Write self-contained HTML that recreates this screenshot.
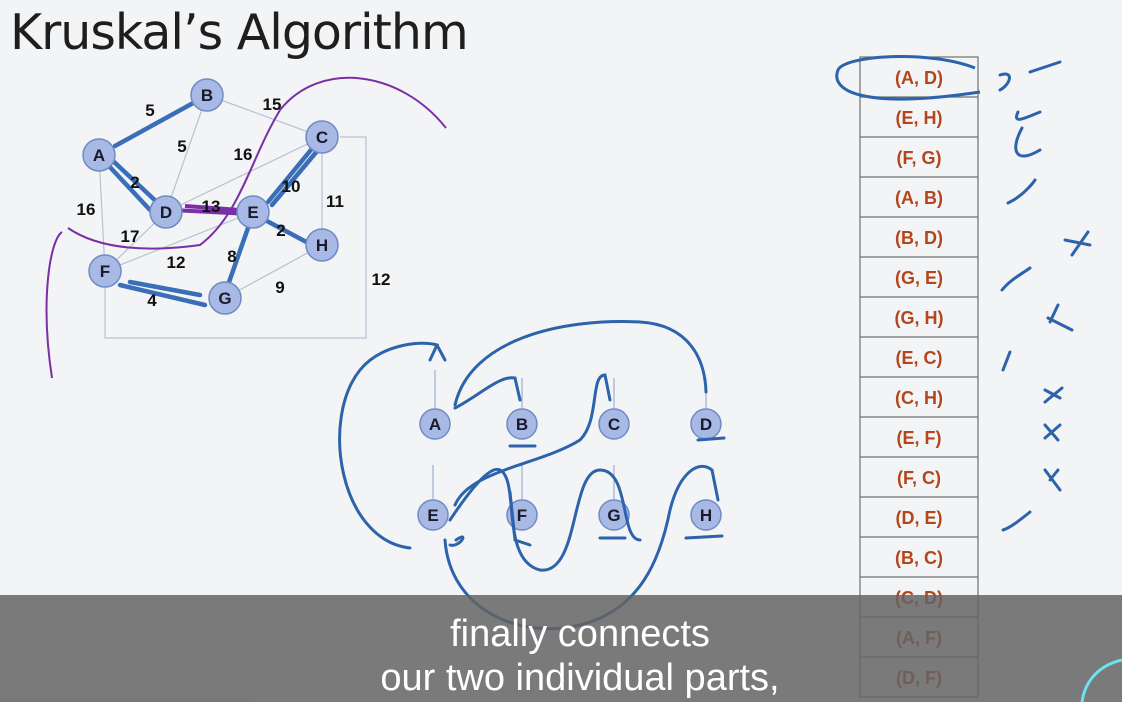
<!DOCTYPE html>
<html><head><meta charset="utf-8"><style>
body{margin:0;width:1122px;height:702px;overflow:hidden;background:#f3f4f6;font-family:"Liberation Sans",sans-serif;position:relative}
.t{position:absolute;left:10px;top:4px;font-size:49px;color:#1e1e1e;font-family:"DejaVu Sans","Liberation Sans",sans-serif;letter-spacing:-1px}
.cap{position:absolute;left:0;top:595px;width:1122px;height:107px;background:rgba(100,100,100,0.85)}
.ct{position:absolute;left:0;width:1160px;text-align:center;color:#fff;font-size:38px;line-height:44px}
</style></head><body>
<div class="t">Kruskal’s Algorithm</div>
<svg width="1122" height="702" style="position:absolute;left:0;top:0" font-family="Liberation Sans" font-weight="bold">
<g stroke="#b8c0d4" stroke-width="1.2" fill="none">
<line x1="99" y1="155" x2="207" y2="95"/><line x1="207" y1="95" x2="322" y2="137"/><line x1="207" y1="95" x2="166" y2="212"/>
<line x1="166" y1="212" x2="322" y2="137"/><line x1="99" y1="155" x2="105" y2="271"/><line x1="166" y1="212" x2="105" y2="271"/>
<line x1="105" y1="271" x2="253" y2="212"/><line x1="225" y1="298" x2="322" y2="245"/><line x1="322" y1="137" x2="322" y2="245"/>
<polyline points="340,137 366,137 366,338 105,338 105,271"/>
</g>
<g stroke="#3a6fb8" stroke-width="4.5" fill="none" stroke-linecap="round">
<path d="M115,146 L195,102"/><path d="M108,165 L150,210 M112,160 L160,205"/><path d="M268,202 L315,145 M272,205 L318,150"/>
<path d="M265,220 L312,245"/><path d="M248,228 L228,285"/><path d="M120,285 L205,305 M130,282 L200,295"/>
</g>
<path d="M172,210 L250,214 M185,206 L240,210" stroke="#7a2fa6" stroke-width="4" fill="none"/>
<path d="M52,378 C40,300 50,240 62,232 M68,228 C100,250 150,252 200,245 C240,215 250,160 280,110 C320,60 400,70 446,128" stroke="#7a2fa6" stroke-width="2" fill="none"/>
<g fill="#111" font-size="17" text-anchor="middle">
<text x="150" y="116">5</text><text x="182" y="152">5</text><text x="272" y="110">15</text><text x="243" y="160">16</text>
<text x="135" y="188">2</text><text x="86" y="215">16</text><text x="130" y="242">17</text><text x="211" y="212">13</text>
<text x="291" y="192">10</text><text x="335" y="207">11</text><text x="281" y="236">2</text><text x="232" y="262">8</text>
<text x="176" y="268">12</text><text x="280" y="293">9</text><text x="152" y="306">4</text><text x="381" y="285">12</text>
</g>
<g fill="#a7b9e4" stroke="#6f8bc4" stroke-width="1.5">
<circle cx="99" cy="155" r="16"/><circle cx="207" cy="95" r="16"/><circle cx="322" cy="137" r="16"/><circle cx="166" cy="212" r="16"/>
<circle cx="253" cy="212" r="16"/><circle cx="105" cy="271" r="16"/><circle cx="225" cy="298" r="16"/><circle cx="322" cy="245" r="16"/>
<circle cx="435" cy="424" r="15"/><circle cx="522" cy="424" r="15"/><circle cx="614" cy="424" r="15"/><circle cx="706" cy="424" r="15"/>
<circle cx="433" cy="515" r="15"/><circle cx="522" cy="515" r="15"/><circle cx="614" cy="515" r="15"/><circle cx="706" cy="515" r="15"/>
</g>
<g fill="#1a1a2a" font-size="17" text-anchor="middle">
<text x="99" y="161">A</text><text x="207" y="101">B</text><text x="322" y="143">C</text><text x="166" y="218">D</text>
<text x="253" y="218">E</text><text x="105" y="277">F</text><text x="225" y="304">G</text><text x="322" y="251">H</text>
<text x="435" y="430">A</text><text x="522" y="430">B</text><text x="614" y="430">C</text><text x="706" y="430">D</text>
<text x="433" y="521">E</text><text x="522" y="521">F</text><text x="614" y="521">G</text><text x="706" y="521">H</text>
</g>
<g stroke="#8aa0cc" stroke-width="1"><line x1="435" y1="408" x2="435" y2="370"/><line x1="522" y1="408" x2="522" y2="378"/><line x1="614" y1="408" x2="614" y2="378"/><line x1="706" y1="408" x2="706" y2="378"/><line x1="433" y1="499" x2="433" y2="465"/><line x1="522" y1="499" x2="522" y2="465"/><line x1="614" y1="499" x2="614" y2="465"/></g>
<g stroke="#2c63aa" stroke-width="3" fill="none" stroke-linecap="round">
<path d="M410,548 C340,540 320,420 360,370 C380,345 420,340 437,345 L430,360 M437,345 L445,360"/>
<path d="M455,405 C470,340 560,318 640,322 C690,325 705,360 706,392"/>
<path d="M455,408 C480,395 500,375 515,378 L520,400"/>
<path d="M455,505 C470,470 540,465 580,440 C600,420 590,375 605,375 L610,400"/>
<path d="M450,520 C470,490 490,465 500,470 C520,480 500,560 540,570 C580,575 570,470 600,470 C630,470 620,540 640,540"/>
<path d="M445,540 C450,610 520,640 580,625 C640,610 660,560 670,510 C680,470 700,460 712,470 L718,500"/>
<path d="M510,492 L515,540 L530,545 M456,540 C470,530 460,548 450,545"/>
<path d="M510,446 L535,446 M698,440 L724,438 M600,538 L625,538 M686,538 L722,536 M884,408 L970,406"/>
<path d="M1000,75 C1015,70 1010,85 1000,90 M1030,72 L1060,62 M1018,112 C1012,125 1025,118 1040,112 M1022,128 C1010,150 1015,165 1040,150 M1008,203 C1025,195 1035,180 1035,180 M1072,255 L1088,232 M1065,240 L1090,245 M1002,290 C1010,280 1020,275 1030,268 M1050,322 L1058,305 M1048,318 L1072,330 M1003,370 L1010,352 M1045,390 L1060,398 M1045,402 L1062,388 M1045,438 L1060,425 M1045,425 L1058,440 M1050,480 L1058,470 M1045,470 L1060,490 M1003,530 C1010,528 1020,520 1030,512"/>
</g>
<g stroke="#6f6f6f" stroke-width="1.2" fill="#f3f4f6"><rect x="860" y="57" width="118" height="640"/></g>
<g stroke="#6f6f6f" stroke-width="1.2">
<line x1="860" y1="97" x2="978" y2="97"/><line x1="860" y1="137" x2="978" y2="137"/><line x1="860" y1="177" x2="978" y2="177"/><line x1="860" y1="217" x2="978" y2="217"/><line x1="860" y1="257" x2="978" y2="257"/><line x1="860" y1="297" x2="978" y2="297"/><line x1="860" y1="337" x2="978" y2="337"/><line x1="860" y1="377" x2="978" y2="377"/><line x1="860" y1="417" x2="978" y2="417"/><line x1="860" y1="457" x2="978" y2="457"/><line x1="860" y1="497" x2="978" y2="497"/><line x1="860" y1="537" x2="978" y2="537"/><line x1="860" y1="577" x2="978" y2="577"/><line x1="860" y1="617" x2="978" y2="617"/><line x1="860" y1="657" x2="978" y2="657"/>
</g>
<g fill="#b4461c" font-size="18" text-anchor="middle">
<text x="919" y="84">(A, D)</text><text x="919" y="124">(E, H)</text><text x="919" y="164">(F, G)</text><text x="919" y="204">(A, B)</text><text x="919" y="244">(B, D)</text><text x="919" y="284">(G, E)</text><text x="919" y="324">(G, H)</text><text x="919" y="364">(E, C)</text><text x="919" y="404">(C, H)</text><text x="919" y="444">(E, F)</text><text x="919" y="484">(F, C)</text><text x="919" y="524">(D, E)</text><text x="919" y="564">(B, C)</text><text x="919" y="604">(C, D)</text><text x="919" y="644">(A, F)</text><text x="919" y="684">(D, F)</text>
</g>
<path d="M980,92 C860,110 830,90 838,70 C845,55 930,50 975,68" stroke="#2c63aa" stroke-width="3" fill="none"/>
</svg>
<div class="cap"></div>
<div class="ct" style="top:612px">finally connects</div>
<div class="ct" style="top:656px">our two individual parts,</div>
<svg width="1122" height="702" style="position:absolute;left:0;top:0"><path d="M1082,702 C1085,680 1100,665 1122,660" stroke="#6fe0f0" stroke-width="3" fill="none"/></svg>
</body></html>
